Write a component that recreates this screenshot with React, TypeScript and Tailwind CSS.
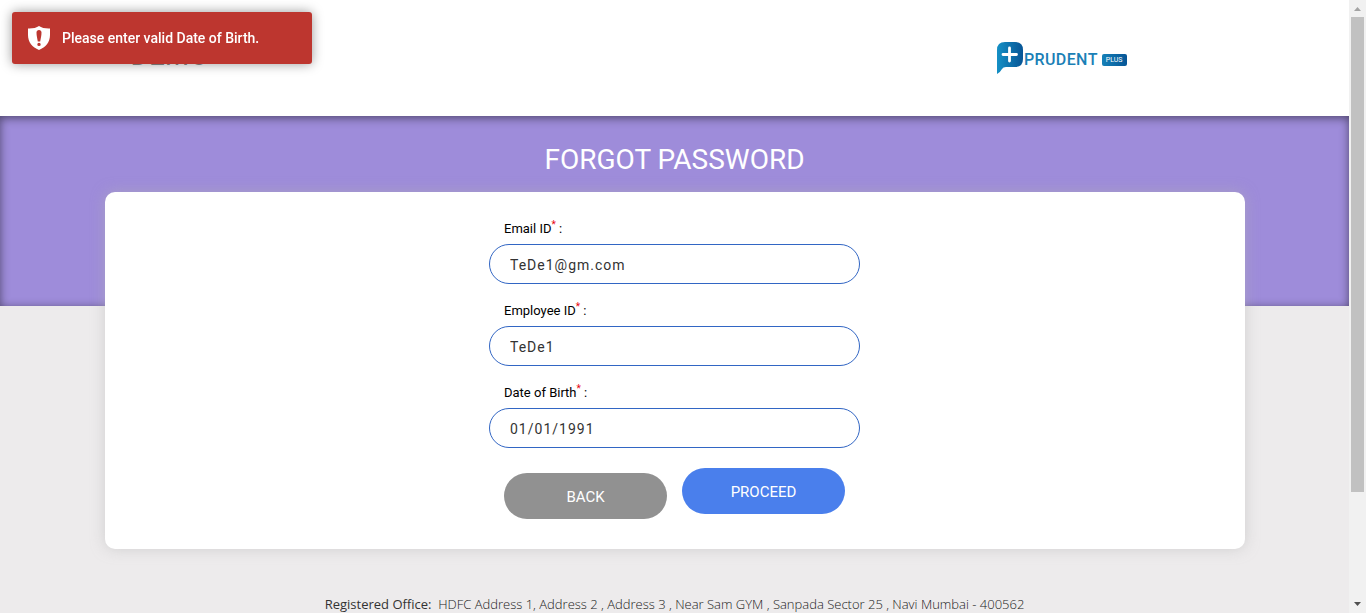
import { useState } from "react";

type FieldProps = {
  id: string;
  label: string;
  type: string;
  initial: string;
};

function Field({ id, label, type, initial }: FieldProps) {
  const [value, setValue] = useState(initial);
  return (
    <div>
      <label htmlFor={id} className="block px-[15px] text-[13px] leading-5 text-black">
        {label}
        <sup className="text-[10px] text-red-600">*</sup> :
      </label>
      <input
        id={id}
        type={type}
        value={value}
        onChange={(e) => setValue(e.target.value)}
        className="mt-[5px] block h-10 w-full rounded-full border border-[#3266c4] bg-white px-5 pt-0.5 text-sm tracking-[1px] text-[#333] outline-none"
      />
    </div>
  );
}

function ShieldIcon() {
  return (
    <svg viewBox="0 0 22 24" className="h-6 w-[22px] shrink-0" aria-hidden="true">
      <path
        fill="#fff"
        fillRule="evenodd"
        d="M11 0C8.500 1.800 4.500 2.700 0 2.500V9c0 7.200 4.300 12.200 11 15 6.700-2.800 11-7.800 11-15V2.500C17.500 2.700 13.500 1.800 11 0ZM8.500 6.500C8.500 4.900 9.500 3.900 11 3.900s2.500 1 2.500 2.600c0 2.900-.7 5.700-1.300 8.900H9.800C9.200 12.200 8.500 9.400 8.500 6.500ZM11 16.700a1.700 1.700 0 1 1 0 3.400 1.700 1.700 0 0 1 0-3.400Z"
      />
    </svg>
  );
}

function PrudentLogo() {
  return (
    <a href="#" className="flex items-start font-['Roboto',sans-serif]">
      <svg viewBox="0 0 27 32" className="h-8 w-[27px]" aria-hidden="true">
        <defs>
          <linearGradient id="mark" x1="0" y1="0" x2="1" y2="0">
            <stop offset="0" stopColor="#1590c5" />
            <stop offset="1" stopColor="#075596" />
          </linearGradient>
        </defs>
        <path
          fill="url(#mark)"
          d="M8 0H18Q26 0 26 8V17Q26 25 18 25H9Q6 25 5 27Q3.500 30 0 32V8Q0 0 8 0Z"
        />
        <path d="M12.500 6V19M6 12.500H19.500" stroke="#fff" strokeWidth="2.800" strokeLinecap="round" />
      </svg>
      <span className="mt-2 text-base leading-5 font-medium tracking-wide text-[#1a80b6]">PRUDENT</span>
      <span className="mt-3 ml-1 rounded-[2px] bg-linear-to-r from-[#1681b8] to-[#075596] px-1 text-[7px] leading-3 text-white">
        PLUS
      </span>
    </a>
  );
}

function PageScrollbar() {
  return (
    <div className="sticky top-0 flex h-screen w-[17px] shrink-0 flex-col items-center bg-[#f1f1f1]" aria-hidden="true">
      <svg viewBox="0 0 17 17" className="size-[17px] shrink-0">
        <path d="M5 11h7L8.500 7Z" fill="#a3a3a3" />
      </svg>
      <div className="min-h-0 w-[13px] flex-1">
        <div className="h-[82%] bg-[#c1c1c1]" />
      </div>
      <svg viewBox="0 0 17 17" className="size-[17px] shrink-0">
        <path d="M5 6h7l-3.500 4Z" fill="#505050" />
      </svg>
    </div>
  );
}

export default function App() {
  return (
    <div className="flex min-h-screen bg-[#edebec] font-['Roboto',sans-serif]">
      <div className="min-w-0 flex-1">
        <header className="bg-white">
          <div className="mx-auto flex h-[116px] max-w-[1140px] items-center justify-between pr-[118px] pl-[26px]">
            <span className="pb-1 text-[28px] leading-8 text-[#8a8a8a]">DEMO</span>
            <PrudentLogo />
          </div>
        </header>

        <main>
          <section className="h-[190px] bg-[#9e8cda] px-4 pt-6 shadow-[inset_0_2px_10px_rgba(0,0,0,0.5)]">
            <h1 className="text-center text-[28px] leading-10 text-white">FORGOT PASSWORD</h1>
          </section>

          <section className="relative mx-auto -mt-[114px] max-w-[1140px] rounded-[10px] bg-white px-4 pt-[27px] pb-[30px] shadow-[0_0_14px_rgba(180,180,180,0.5)]">
            <form
              className="mx-auto flex max-w-[371px] flex-col gap-[17px]"
              onSubmit={(e) => e.preventDefault()}
            >
              <Field id="email" label="Email ID" type="email" initial="TeDe1@gm.com" />
              <Field id="employee" label="Employee ID" type="text" initial="TeDe1" />
              <Field id="birth" label="Date of Birth" type="text" initial="01/01/1991" />
              <div className="mt-[3px] grid grid-cols-2 items-start gap-[15px] px-[15px] text-[15px] text-white">
                <button type="button" className="mt-[5px] h-[46px] rounded-full bg-[#919191] pt-0.5">
                  BACK
                </button>
                <button type="submit" className="h-[46px] rounded-full bg-[#4a7fec] pt-0.5">
                  PROCEED
                </button>
              </div>
            </form>
          </section>
        </main>

        <footer className="px-4 pt-[46px] text-center font-['Open_Sans',sans-serif] text-[13px] leading-[18px] font-light text-[#222]">
          <b className="font-medium text-[#333]">Registered Office:</b>&nbsp; HDFC Address 1, Address 2 , Address 3 , Near Sam GYM ,
          Sanpada Sector 25 , Navi Mumbai - 400562
        </footer>
      </div>

      <PageScrollbar />

      <div
        role="alert"
        className="fixed top-3 left-3 flex h-[52px] w-[300px] items-center gap-3 rounded-[3px] bg-[#bd362f] px-4 text-sm font-medium text-white shadow-[0_0_12px_rgba(0,0,0,0.4)]"
      >
        <ShieldIcon />
        Please enter valid Date of Birth.
      </div>
    </div>
  );
}
